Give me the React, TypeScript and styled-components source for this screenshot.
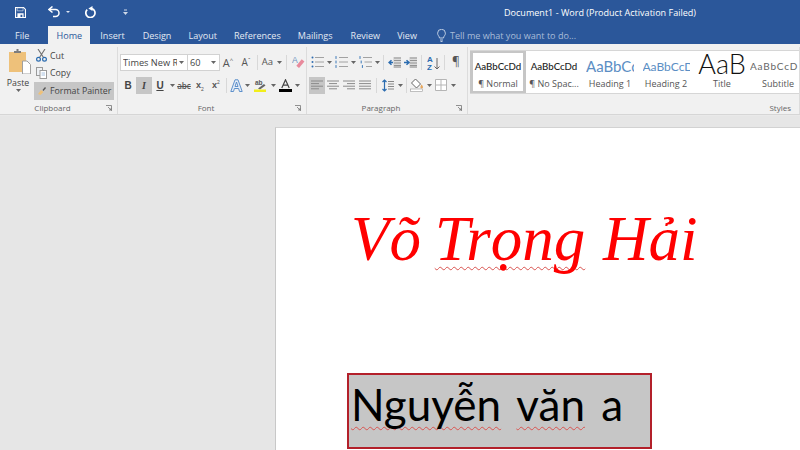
import React from 'react';
import styled, { createGlobalStyle } from 'styled-components';

const GlobalStyle = createGlobalStyle`
  html, body {
    margin: 0;
    padding: 0;
    width: 800px;
    height: 450px;
    overflow: hidden;
    font-family: "Open Sans", "Liberation Sans", sans-serif;
  }
`;

const Window = styled.div`
  display: flex;
  flex-direction: column;
  width: 800px;
  height: 450px;
  overflow: hidden;
  background: #e6e6e6;
`;

const TitleBar = styled.header`
  display: flex;
  align-items: center;
  height: 26px;
  flex: none;
  background: #2b579a;
  color: #fff;
  position: relative;
`;

const Qat = styled.div`
  display: flex;
  align-items: center;
  padding: 0 0 2px 15px;
  height: 100%;
  box-sizing: border-box;
`;

const QatButton = styled.span<{ $w: number }>`
  display: flex;
  align-items: center;
  width: ${(p) => p.$w}px;
`;

const DocTitle = styled.div`
  position: absolute;
  left: 504px;
  top: 6px;
  font-size: 9.05px;
  line-height: 14px;
  white-space: nowrap;
  color: #fff;
`;

const TabRow = styled.nav`
  display: flex;
  align-items: stretch;
  height: 18px;
  flex: none;
  background: #2b579a;
  padding-left: 15px;
`;

const Tab = styled.div<{ $active?: boolean; $gap: number }>`
  display: flex;
  align-items: center;
  font-size: 9.05px;
  margin-right: ${(p) => p.$gap}px;
  color: ${(p) => (p.$active ? '#2b579a' : '#e4eaf3')};
  ${(p) => p.$active && 'background: #f1f1f1; width: 42px; justify-content: center;'}
`;

const TellMe = styled.div`
  display: flex;
  align-items: center;
  gap: 4px;
  margin-left: 20px;
  font-size: 9.05px;
  color: #a9bcd8;
`;

const Ribbon = styled.section`
  display: flex;
  height: 70px;
  flex: none;
  background: #f1f1f1;
  border-bottom: 1px solid #d6d6d6;
  box-sizing: content-box;
`;

const Group = styled.div<{ $w: number }>`
  display: flex;
  flex-direction: column;
  width: ${(p) => p.$w}px;
  flex: none;
  margin-top: 3px;
  border-right: 1px solid #dcdcdc;
  box-sizing: border-box;
  position: relative;
`;

const GroupBody = styled.div`
  flex: 1;
  display: flex;
  min-height: 0;
`;

const GroupLabel = styled.div`
  height: 13px;
  line-height: 13px;
  text-align: center;
  padding-right: 12px;
  font-size: 8px;
  color: #666;
`;

const Launcher = styled.svg`
  position: absolute;
  right: 5px;
  bottom: 3px;
  width: 6px;
  height: 6px;
`;

const PasteButton = styled.div`
  display: flex;
  flex-direction: column;
  align-items: center;
  width: 34px;
  padding: 2px 0 0 2px;
  box-sizing: border-box;
  font-size: 8.8px;
  color: #444;
  line-height: 11px;

  svg:first-child {
    margin: 0 -4px 4px 0;
  }
`;

const ClipList = styled.div`
  display: flex;
  flex-direction: column;
`;

const ClipItem = styled.div<{ $active?: boolean }>`
  display: flex;
  align-items: center;
  gap: 3px;
  height: 17.5px;
  width: 80px;
  padding-left: 2px;
  font-size: 8.8px;
  color: #444;
  box-sizing: border-box;
  white-space: nowrap;
  ${(p) => p.$active && 'background: #c6c6c6;'}
`;

const Rows = styled.div<{ $left: number }>`
  display: flex;
  flex-direction: column;
  gap: 5px;
  padding: 6px 0 0 ${(p) => p.$left}px;
`;

const ToolRow = styled.div`
  display: flex;
  align-items: center;
  height: 18px;
`;

const Combo = styled.div<{ $w: number }>`
  display: flex;
  align-items: center;
  justify-content: space-between;
  gap: 2px;
  width: ${(p) => p.$w}px;
  height: 17px;
  background: #fff;
  border: 1px solid #d2d2d2;
  margin-right: -1px;
  box-sizing: border-box;
  padding: 0 3px 0 2px;
  font-size: 9.2px;
  color: #444;
  white-space: nowrap;
`;

const ComboValue = styled.span`
  flex: 1;
  min-width: 0;
  overflow: hidden;
`;

const Tool = styled.div<{ $w: number; $active?: boolean }>`
  display: flex;
  align-items: center;
  justify-content: center;
  width: ${(p) => p.$w}px;
  height: 17px;
  flex: none;
  color: #444;
  ${(p) => p.$active && 'background: #c6c6c6;'}
`;

const Sep = styled.div<{ $mx?: number }>`
  width: 1px;
  height: 15px;
  flex: none;
  background: #d8d8d8;
  margin: 0 ${(p) => p.$mx ?? 4}px;
`;

const BoldGlyph = styled.span<{ $italic?: boolean; $underline?: boolean; $serif?: boolean }>`
  font-family: ${(p) => (p.$serif ? '"Liberation Serif", serif' : '"Liberation Sans", sans-serif')};
  font-size: 10px;
  font-weight: 700;
  font-style: ${(p) => (p.$italic ? 'italic' : 'normal')};
  text-decoration: ${(p) => (p.$underline ? 'underline' : 'none')};
  color: #444;
`;

const GlyphSmall = styled.span`
  font-size: 9px;
  font-family: "Liberation Sans", sans-serif;
  font-weight: 700;
  color: #555;
  white-space: nowrap;

  sub, sup {
    font-size: 5px;
    font-weight: 400;
    line-height: 0;
  }
`;

const Strike = styled.span`
  font-size: 8px;
  font-weight: 600;
  color: #555;
  text-decoration: line-through;
`;

const PlainGlyph = styled.span<{ $size: number }>`
  font-size: ${(p) => p.$size}px;
  color: #555;
  white-space: nowrap;
  line-height: 1;

  sup {
    font-size: 6px;
  }
`;

const Gallery = styled.div`
  display: flex;
  margin: 3px 0 0 2px;
  height: 44px;
  background: #fff;
  border-bottom: 1px solid #d6d6d6;
  border-top: 1px solid #d6d6d6;
  box-sizing: border-box;
  overflow: hidden;
`;

const StyleCard = styled.div<{ $w: number; $selected?: boolean }>`
  display: flex;
  flex-direction: column;
  align-items: center;
  width: ${(p) => p.$w}px;
  flex: none;
  box-sizing: border-box;
  overflow: hidden;
  padding-top: 2px;
  ${(p) => p.$selected && 'padding: 0; border: 3px solid #c6c6c6; margin-top: -1px; margin-bottom: -1px;'}
`;

const StylePreview = styled.div<{ $size: number; $color: string; $weight?: number; $spacing?: number; $clip?: number; $lh?: number }>`
  height: 24px;
  flex: none;
  width: ${(p) => p.$clip ?? 50}px;
  overflow: hidden;
  text-align: ${(p) => (p.$clip ? 'left' : 'center')};
  white-space: nowrap;
  font-family: Lato, "Open Sans", sans-serif;
  font-size: ${(p) => p.$size}px;
  line-height: ${(p) => p.$lh ?? 27}px;
  color: ${(p) => p.$color};
  font-weight: ${(p) => p.$weight ?? 400};
  letter-spacing: ${(p) => p.$spacing ?? 0}px;
`;

const StyleName = styled.div`
  font-size: 9px;
  line-height: 13px;
  color: #555;
  white-space: nowrap;
`;

const StylesLabel = styled.div`
  height: 13px;
  line-height: 13px;
  text-align: right;
  padding-right: 8px;
  font-size: 8px;
  color: #666;
`;

const Workspace = styled.main`
  flex: 1;
  display: flex;
  min-height: 0;
  padding: 11px 0 0 275px;
  background: #e6e6e6;
  border-top: 1px solid #e9e9e9;
`;

const Page = styled.article`
  flex: 1;
  background: #fff;
  border-left: 1px solid #c8c8c8;
  border-top: 1px solid #d2d2d2;
  padding: 72px 0 0 71px;
  overflow: hidden;
`;

const Heading = styled.h1`
  margin: 0;
  padding-left: 4px;
  font-family: "Liberation Serif", "Times New Roman", serif;
  font-style: italic;
  font-weight: 400;
  font-size: 63px;
  line-height: 78px;
  color: #f00;
  white-space: nowrap;
  height: 78px;
`;

const Squiggle = styled.span`
  margin: 0 2px 0 -2px;
  text-decoration: underline wavy #d9534f 1px;
  text-underline-offset: 6px;
  text-decoration-skip-ink: none;
`;

const Selected = styled.div`
  margin-top: 95px;
  width: 305px;
  height: 76px;
  box-sizing: border-box;
  background: #c6c6c6;
  border: 2px solid #b3202a;
  text-indent: 2px;
  font-family: Lato, "Open Sans", sans-serif;
  font-size: 44px;
  line-height: 59px;
  word-spacing: 5px;
  color: #000;
  white-space: nowrap;
`;

const NameSquiggle = styled.span`
  text-decoration: underline wavy #d9534f 1px;
  text-underline-offset: 5px;
  text-decoration-skip-ink: none;
`;

const Caret = () => (
  <svg width="5" height="3" viewBox="0 0 5 3">
    <path d="M0 0h5L2.5 3z" fill="#666" />
  </svg>
);

const LauncherIcon = () => (
  <Launcher viewBox="0 0 6 6">
    <path d="M0 .5h5.500V6M2 2l3 3M3 5h2V3" fill="none" stroke="#777" strokeWidth="0.8" />
  </Launcher>
);

const Lines = ({ kind }: { kind: 'left' | 'center' | 'right' | 'justify' }) => {
  const rows: [number, number][] =
    kind === 'left'
      ? [[0, 12], [0, 8], [0, 12], [0, 8]]
      : kind === 'center'
        ? [[0, 12], [2, 10], [0, 12], [2, 10]]
        : kind === 'right'
          ? [[0, 12], [4, 12], [0, 12], [4, 12]]
          : [[0, 12], [0, 12], [0, 12], [0, 12]];
  return (
    <svg width="12" height="10" viewBox="0 0 12 10">
      {rows.map(([a, b], i) => (
        <path key={i} d={`M${a} ${1 + i * 2.6}H${b}`} stroke="#8a8a8a" strokeWidth="1" />
      ))}
    </svg>
  );
};

const ListIcon = ({ numbered, multi }: { numbered?: boolean; multi?: boolean }) => (
  <svg width="13" height="12" viewBox="0 0 13 12">
    {[1.5, 6, 10.5].map((y, i) => (
      <g key={y}>
        {numbered || multi ? (
          <path d={`M${1 + (multi ? i * 1.2 : 0)} ${y - 1.4}v2.800`} stroke="#3b78b8" strokeWidth="1" />
        ) : (
          <circle cx="1.500" cy={y} r="1" fill="#2f6db0" />
        )}
        <path d={`M${4 + (multi ? i * 1.5 : 0)} ${y}H13`} stroke="#a2a2a2" strokeWidth="1" />
      </g>
    ))}
  </svg>
);

const IndentIcon = ({ flip }: { flip?: boolean }) => (
  <svg width="13" height="11" viewBox="0 0 13 11">
    <rect x="5" y="0" width="8" height="11" fill="#dcdcdc" />
    {[1, 3.5, 6, 8.5, 10].map((y) => (
      <path key={y} d={`M6 ${y}H13`} stroke="#8a8a8a" strokeWidth="0.9" />
    ))}
    <path d={flip ? 'M0 5.500h4M2.500 3.200L5 5.500 2.500 7.800' : 'M5 5.500H1M3.500 3.200L1 5.500l2.500 2.300'} fill="none" stroke="#2b6cb0" strokeWidth="1.500" />
  </svg>
);

export default function App() {
  return (
    <Window>
      <GlobalStyle />
      <TitleBar>
        <Qat>
          <QatButton $w={33}>
            <svg width="11" height="11" viewBox="0 0 12 12">
              <path d="M.6.6h8.800l2 2v8.800H.6z" fill="#2b579a" stroke="#fff" strokeWidth="1.200" />
              <path d="M2.400 1h6.400v3.200H2.400z" fill="#2b579a" stroke="#fff" strokeWidth="0.600" />
              <path d="M2.600 6.800h6.800V11H8V8.500H6V11H2.600z" fill="#fff" />
            </svg>
          </QatButton>
          <QatButton $w={37}>
            <svg width="23" height="12" viewBox="0 0 23 12">
              <path d="M1.500 3.500h6a3.500 3.500 0 0 1 0 7H5" fill="none" stroke="#fff" strokeWidth="1.500" />
              <path d="M4.500.5L1 3.500l3.500 3" fill="none" stroke="#fff" strokeWidth="1.500" />
              <path d="M18 5h4l-2 2z" fill="#dfe6f1" />
            </svg>
          </QatButton>
          <QatButton $w={38}>
            <svg width="12" height="12" viewBox="0 0 12 12">
              <path d="M2.200 3.600A4.600 4.600 0 1 0 7 2.600" fill="none" stroke="#fff" strokeWidth="1.700" />
              <path d="M7.500 0v5L3.400 2.500z" fill="#fff" />
            </svg>
          </QatButton>
          <svg width="5" height="6" viewBox="0 0 5 6">
            <path d="M1 1h3" stroke="#cfd9e8" />
            <path d="M0 3h5L2.500 6z" fill="#cfd9e8" />
          </svg>
        </Qat>
        <DocTitle>Document1 - Word (Product Activation Failed)</DocTitle>
      </TitleBar>

      <TabRow>
        <Tab $gap={19}>File</Tab>
        <Tab $active $gap={10}>Home</Tab>
        <Tab $gap={18}>Insert</Tab>
        <Tab $gap={17}>Design</Tab>
        <Tab $gap={17}>Layout</Tab>
        <Tab $gap={17}>References</Tab>
        <Tab $gap={18}>Mailings</Tab>
        <Tab $gap={17}>Review</Tab>
        <Tab $gap={0}>View</Tab>
        <TellMe>
          <svg width="9" height="13" viewBox="0 0 9 13">
            <path d="M2.500 9C2.300 7 .6 6.500.6 4.200a3.900 3.900 0 0 1 7.800 0C8.400 6.500 6.700 7 6.500 9zM3 11h3M3.500 12.500h2" fill="none" stroke="#cdd9ea" strokeWidth="0.9" />
          </svg>
          Tell me what you want to do...
        </TellMe>
      </TabRow>

      <Ribbon>
        <Group $w={118}>
          <GroupBody>
            <PasteButton>
              <svg width="22" height="25" viewBox="0 0 22 25">
                <rect x="0" y="3" width="17" height="20" fill="#eec17a" />
                <path d="M5 4V2h2.500V0h2v2H12v2z" fill="#7d7d7d" />
                <path d="M13.500 12H18l3.500 3.500V25h-8z" fill="#fff" stroke="#a0a0a0" />
              </svg>
              <span>Paste</span>
              <Caret />
            </PasteButton>
            <ClipList>
              <ClipItem>
                <svg width="11" height="13" viewBox="0 0 11 13">
                  <path d="M2 0l5.500 8.500M9 0L3.500 8.500" stroke="#6f6f6f" strokeWidth="1.100" fill="none" />
                  <circle cx="2.500" cy="10.300" r="1.900" fill="none" stroke="#2b6cb0" strokeWidth="1.200" />
                  <circle cx="8.500" cy="10.300" r="1.900" fill="none" stroke="#2b6cb0" strokeWidth="1.200" />
                </svg>
                Cut
              </ClipItem>
              <ClipItem>
                <svg width="11" height="12" viewBox="0 0 11 12">
                  <rect x="0.500" y="0.500" width="6" height="8" fill="#eef1f5" stroke="#9a9a9a" />
                  <rect x="4" y="3.500" width="6.500" height="8" fill="#fff" stroke="#9a9a9a" />
                  <path d="M5.500 6h3.500M5.500 8h3.500" stroke="#8fb0d6" strokeWidth="0.8" />
                </svg>
                Copy
              </ClipItem>
              <ClipItem $active>
                <svg width="11" height="11" viewBox="0 0 11 11">
                  <path d="M2 9l3-4 2.500 2-3 3z" fill="#eec17a" />
                  <path d="M6.500 5l2.500-3 1 1-2.500 3z" fill="#555" />
                </svg>
                Format Painter
              </ClipItem>
            </ClipList>
          </GroupBody>
          <GroupLabel>Clipboard</GroupLabel>
          <LauncherIcon />
        </Group>

        <Group $w={189}>
          <GroupBody>
            <Rows $left={2}>
              <ToolRow>
                <Combo $w={68}>
                  <ComboValue>Times New Roman</ComboValue>
                  <Caret />
                </Combo>
                <Combo $w={33}>
                  <ComboValue>60</ComboValue>
                  <Caret />
                </Combo>
                <Tool $w={18}><PlainGlyph $size={11}>A<sup>^</sup></PlainGlyph></Tool>
                <Tool $w={18}><PlainGlyph $size={10}>A<sup>ˇ</sup></PlainGlyph></Tool>
                <Sep $mx={2} />
                <Tool $w={24}><PlainGlyph $size={9.5}>Aa</PlainGlyph>&nbsp;<Caret /></Tool>
                <Sep $mx={2} />
                <Tool $w={18}>
                  <svg width="13" height="14" viewBox="0 0 12 13">
                    <text x="0" y="7" fontSize="8" fill="#6f93bd" fontFamily="Liberation Sans">A</text>
                    <path d="M4 10l5-6 2.500 2-5 6z" fill="#e88a9c" />
                  </svg>
                </Tool>
              </ToolRow>
              <ToolRow>
                <Tool $w={16}><BoldGlyph>B</BoldGlyph></Tool>
                <Tool $w={16} $active><BoldGlyph $italic $serif>I</BoldGlyph></Tool>
                <Tool $w={16}><BoldGlyph $underline>U</BoldGlyph></Tool>
                <Tool $w={8}><Caret /></Tool>
                <Tool $w={16}><Strike>abc</Strike></Tool>
                <Tool $w={16}><GlyphSmall>x<sub>2</sub></GlyphSmall></Tool>
                <Tool $w={16}><GlyphSmall>x<sup>2</sup></GlyphSmall></Tool>
                <Sep $mx={2} />
                <Tool $w={14}>
                  <svg width="13" height="13" viewBox="0 0 13 13">
                    <path d="M.8 12.500L5 .8h3l4.200 11.700H9.500L8.600 9.500H4.400l-.9 3zM5 7.500h3L6.500 3z" fill="#e4edf8" fillRule="evenodd" stroke="#4f86c6" strokeWidth="0.9" />
                  </svg>
                </Tool>
                <Tool $w={8}><Caret /></Tool>
                <Tool $w={18}>
                  <svg width="13" height="13" viewBox="0 0 13 13">
                    <text x="1" y="6" fontSize="6.500" fill="#555" fontFamily="Liberation Sans" fontWeight="700">ab</text>
                    <path d="M4 9.500l6-4.500 1.500 1.500L6 10.500z" fill="#666" />
                    <rect x="0" y="10.500" width="12" height="2.500" fill="#f2ee1b" />
                  </svg>
                </Tool>
                <Tool $w={8}><Caret /></Tool>
                <Tool $w={16}>
                  <svg width="13" height="13" viewBox="0 0 13 13">
                    <path d="M2.800 9L6.500 .8 10.200 9M4.200 6.200h4.600" fill="none" stroke="#444" strokeWidth="1.200" />
                    <rect x="0" y="10" width="13" height="3" fill="#000" />
                  </svg>
                </Tool>
                <Tool $w={8}><Caret /></Tool>
              </ToolRow>
            </Rows>
          </GroupBody>
          <GroupLabel>Font</GroupLabel>
          <LauncherIcon />
        </Group>

        <Group $w={161}>
          <GroupBody>
            <Rows $left={2}>
              <ToolRow>
                <Tool $w={16}><ListIcon /></Tool>
                <Tool $w={8}><Caret /></Tool>
                <Tool $w={16}><ListIcon numbered /></Tool>
                <Tool $w={8}><Caret /></Tool>
                <Tool $w={16}><ListIcon multi /></Tool>
                <Tool $w={8}><Caret /></Tool>
                <Sep $mx={2} />
                <Tool $w={16}><IndentIcon /></Tool>
                <Tool $w={16}><IndentIcon flip /></Tool>
                <Sep $mx={3} />
                <Tool $w={16}>
                  <svg width="13" height="15" viewBox="0 0 13 15">
                    <text x="0" y="7" fontSize="8" fill="#2b6cb0" fontFamily="Liberation Sans" fontWeight="700">A</text>
                    <text x="0" y="15" fontSize="8" fill="#2b6cb0" fontFamily="Liberation Sans" fontWeight="700">Z</text>
                    <path d="M10 3v11M7.500 11.500l2.500 2.500 2.500-2.500" fill="none" stroke="#666" />
                  </svg>
                </Tool>
                <Sep $mx={3} />
                <Tool $w={16}><PlainGlyph $size={12}>¶</PlainGlyph></Tool>
              </ToolRow>
              <ToolRow>
                <Tool $w={16} $active><Lines kind="left" /></Tool>
                <Tool $w={16}><Lines kind="center" /></Tool>
                <Tool $w={16}><Lines kind="right" /></Tool>
                <Tool $w={16}><Lines kind="justify" /></Tool>
                <Sep $mx={3} />
                <Tool $w={16}>
                  <svg width="12" height="13" viewBox="0 0 12 13">
                    <path d="M2.500 1v11M.5 3L2.500 1l2 2M.5 10l2 2 2-2" fill="none" stroke="#2b6cb0" strokeWidth="1.200" />
                    <path d="M6 2.500h6M6 5h6M6 7.500h6M6 10h6" stroke="#888" />
                  </svg>
                </Tool>
                <Tool $w={8}><Caret /></Tool>
                <Sep $mx={2} />
                <Tool $w={16}>
                  <svg width="14" height="14" viewBox="0 0 14 14">
                    <path d="M5.500 1l5 5-4 4-5-5z" fill="#fff" stroke="#666" />
                    <path d="M11.500 6.500c1 1.300 1.500 2 1.500 2.700a1.300 1.300 0 0 1-2.600 0c0-.7.500-1.400 1.100-2.700z" fill="#e6a65c" />
                    <rect x="0.500" y="11" width="12" height="2.500" fill="#fff" stroke="#999" strokeWidth="0.6" />
                  </svg>
                </Tool>
                <Tool $w={8}><Caret /></Tool>
                <Tool $w={16}>
                  <svg width="12" height="12" viewBox="0 0 12 12">
                    <path d="M.5.5h11v11H.5zM6 .5v11M.5 6h11" fill="#fff" stroke="#b5b5b5" />
                  </svg>
                </Tool>
                <Tool $w={8}><Caret /></Tool>
              </ToolRow>
            </Rows>
          </GroupBody>
          <GroupLabel>Paragraph</GroupLabel>
          <LauncherIcon />
        </Group>

        <Group $w={332}>
          <Gallery>
            <StyleCard $w={56} $selected>
              <StylePreview $size={9.7} $color="#222" $weight={500}>AaBbCcDd</StylePreview>
              <StyleName>¶ Normal</StyleName>
            </StyleCard>
            <StyleCard $w={56}>
              <StylePreview $size={9.7} $color="#222" $weight={500}>AaBbCcDd</StylePreview>
              <StyleName>¶ No Spac...</StyleName>
            </StyleCard>
            <StyleCard $w={56}>
              <StylePreview $size={15} $color="#5b8ec4" $clip={48}>AaBbCc</StylePreview>
              <StyleName>Heading 1</StyleName>
            </StyleCard>
            <StyleCard $w={56}>
              <StylePreview $size={12} $color="#5b8ec4" $clip={47}>AaBbCcD</StylePreview>
              <StyleName>Heading 2</StyleName>
            </StyleCard>
            <StyleCard $w={56}>
              <StylePreview $size={27} $color="#111" $weight={300} $lh={22}>AaB</StylePreview>
              <StyleName>Title</StyleName>
            </StyleCard>
            <StyleCard $w={56}>
              <StylePreview $size={10} $color="#666" $spacing={0.8} $clip={56}>AaBbCcD</StylePreview>
              <StyleName>Subtitle</StyleName>
            </StyleCard>
          </Gallery>
          <GroupBody />
          <StylesLabel>Styles</StylesLabel>
        </Group>
      </Ribbon>

      <Workspace>
        <Page>
          <Heading>
            Võ <Squiggle>Trọng</Squiggle> Hải
          </Heading>
          <Selected>
            <NameSquiggle>Nguyễn</NameSquiggle> <NameSquiggle>văn</NameSquiggle> a
          </Selected>
        </Page>
      </Workspace>
    </Window>
  );
}
